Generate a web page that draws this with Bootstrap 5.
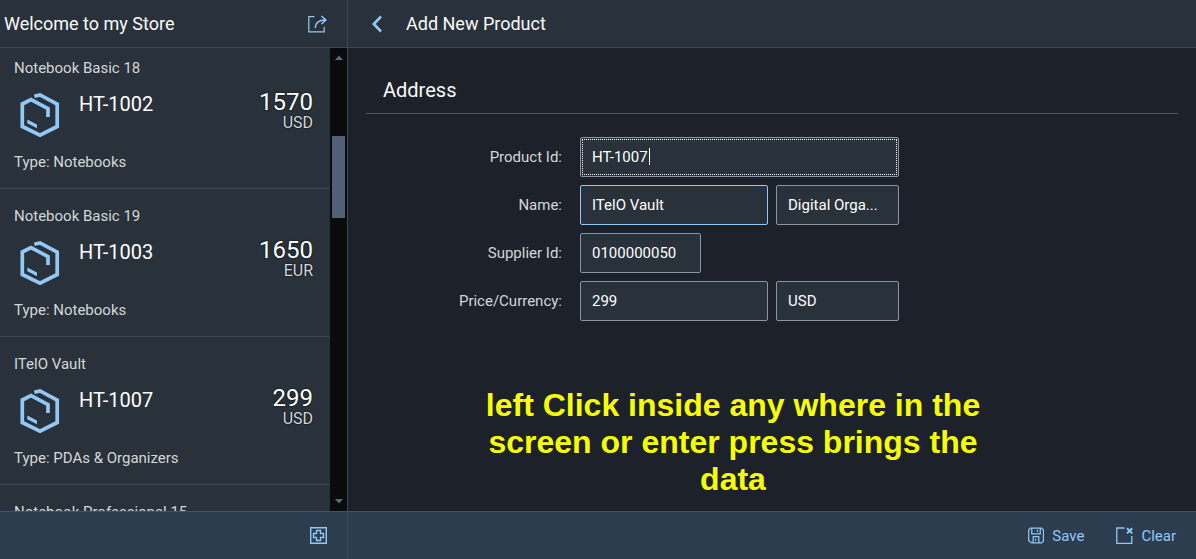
<!DOCTYPE html>
<html lang="en">
<head>
<meta charset="utf-8">
<meta name="viewport" content="width=device-width, initial-scale=1">
<title>My Store</title>
<link href="https://cdn.jsdelivr.net/npm/bootstrap@5.3.0/dist/css/bootstrap.min.css" rel="stylesheet">
<style>
  :root { --shell:#29313a; --page:#1d2129; --line:#3d4853; --accent:#91c8f6; --soft:#d3d7d9; --bar:#2c3d4f; }
  body { font-family:Roboto,"Noto Sans",sans-serif; font-size:15px; line-height:20px; color:#fafafa; background:var(--page); }
  .master { width:348px; border-right:1px solid var(--line); }
  .top-bar { height:48px; background:var(--shell); border-bottom:1px solid var(--line); }
  .top-bar h1, .top-bar h2 { font-size:18px; line-height:24px; font-weight:400; margin:0; }
  .bottom-bar { height:48px; background:var(--bar); border-top:1px solid #3f5468; }
  .tool { background:none; border:0; padding:0; color:var(--accent); display:flex; align-items:center; font-size:15px; line-height:20px; }
  .tool svg, .prod-icon { fill:none; stroke:currentColor; }
  .products { background:var(--shell); }
  .product { padding:17px 17px 16px 14px; border-bottom:1px solid var(--line); color:var(--soft); }
  .product:first-child { padding-top:10px; }
  .product-main { margin:12px 0; min-height:50px; }
  .prod-icon { color:var(--accent); width:50px; height:50px; margin-right:15px; }
  .prod-id { color:#fff; font-size:20px; line-height:28px; }
  .price { color:#fff; font-size:24px; line-height:24px; text-shadow:0 0 2px #000; }
  .unit { font-size:16px; line-height:18px; text-shadow:0 0 2px #000; }
  .scroll-track { width:17px; background:#0a0b0d; color:#5a6b80; padding:6px 0; }
  .scroll-thumb { width:13px; height:82px; background:#525f75; margin-top:75px; }
  .detail-body { padding:30px 18px 0; }
  .section-title { font-size:20px; line-height:24px; font-weight:400; padding:0 17px 11px; border-bottom:1px solid #515861; margin-bottom:23px; }
  .form-line { display:grid; grid-template-columns:196fr 319fr 261fr; column-gap:18px; align-items:center; margin-bottom:8px; }
  .form-line label { text-align:right; color:var(--soft); }
  .pair { display:grid; grid-template-columns:188fr 123fr; gap:8px; }
  .field { width:100%; height:40px; padding:0 11px; color:#fff; background:var(--shell); border:1px solid #8696a9; border-radius:2px; }
  .field-hover { border-color:var(--accent); }
  .field-active { outline:1px dotted #fff; outline-offset:-3px; }
  .field-short { width:38%; }
  .caret { position:absolute; left:69px; top:11px; width:1px; height:17px; background:#fff; }
  .hint { font-family:"Liberation Sans",Arial,sans-serif; font-weight:700; font-size:32px; line-height:37px; color:#f8ff00; text-align:center; margin:66px 78px 0 0; }
</style>
</head>
<body>
<div class="d-flex vh-100 overflow-hidden">
  <aside class="master d-flex flex-column flex-shrink-0">
    <header class="top-bar d-flex align-items-center justify-content-between flex-shrink-0 ps-1">
      <h1>Welcome to my Store</h1>
      <button class="tool me-3 pe-1" type="button" aria-label="Share">
        <svg width="19" height="18" viewBox="0 0 19 18" stroke-width="1.2"><path d="M6.5 1.6H.8v15.2h15.4v-5"/><path stroke-width="1.6" d="M7.3 13C7.3 8.500 10.500 5 17.500 5M13.500 1l4.300 4-4.300 4"/></svg>
      </button>
    </header>
    <div class="d-flex flex-grow-1 overflow-hidden">
      <div class="products flex-grow-1" id="products"></div>
      <div class="scroll-track d-flex flex-column align-items-center flex-shrink-0" aria-hidden="true">
        <svg width="8" height="7"><path d="M0 6l4-4.500L8 6z" fill="currentColor"/></svg>
        <div class="scroll-thumb"></div>
        <svg class="mt-auto" width="8" height="7"><path d="M0 1l4 4.500L8 1z" fill="currentColor"/></svg>
      </div>
    </div>
    <footer class="bottom-bar d-flex align-items-center justify-content-end flex-shrink-0 pe-3">
      <button class="tool me-1" type="button" aria-label="Add product">
        <svg width="17" height="17" viewBox="0 0 17 17" stroke-width="1.400"><path d="M.7.7h15.600v15.600H.7zM6.500 3.500h4v3h3v4h-3v3h-4v-3h-3v-4h3z"/></svg>
      </button>
    </footer>
  </aside>

  <main class="d-flex flex-column flex-grow-1">
    <header class="top-bar d-flex align-items-center flex-shrink-0 ps-4">
      <button class="tool" type="button" aria-label="Back">
        <svg width="10" height="18" viewBox="0 0 10 18" stroke-width="2.600"><path d="M9 1.500L1.800 9 9 16.500"/></svg>
      </button>
      <h2 class="ms-4">Add New Product</h2>
    </header>
    <div class="detail-body flex-grow-1 overflow-hidden">
      <form id="product-form">
        <h3 class="section-title">Address</h3>
        <div class="form-line">
          <label for="pid">Product Id:</label>
          <div class="position-relative"><input class="field field-active d-block" id="pid" value="HT-1007"><span class="caret"></span></div>
        </div>
        <div class="form-line">
          <label for="pname">Name:</label>
          <div class="pair"><input class="field field-hover" id="pname" value="ITelO Vault"><input class="field" aria-label="Category" value="Digital Orga..."></div>
        </div>
        <div class="form-line">
          <label for="supplier">Supplier Id:</label>
          <div><input class="field field-short d-block" id="supplier" value="0100000050"></div>
        </div>
        <div class="form-line">
          <label for="price">Price/Currency:</label>
          <div class="pair"><input class="field" id="price" value="299"><input class="field" aria-label="Currency" value="USD"></div>
        </div>
      </form>
      <p class="hint">left Click inside any where in the<br>screen or enter press brings the<br>data</p>
    </div>
    <footer class="bottom-bar d-flex align-items-center justify-content-end flex-shrink-0 pe-3">
      <button class="tool me-4" type="submit" form="product-form">
        <svg class="me-2" width="16" height="17" viewBox="0 0 17 17" stroke-width="1.300"><path d="M2.600.7h11.800l2 2v11.700l-2 2H3.800L.7 13.800V2.600zM4 .7v6.100h9V.7M10 2.300v2.500M5.500 16.300V9.700h6v6.600M8 12v2"/></svg>Save
      </button>
      <button class="tool ms-2 me-1" type="reset" form="product-form">
        <svg class="me-2" width="17" height="17" viewBox="0 0 17 17" stroke-width="1.300"><path d="M8.500 1H.8v15.300h15V9"/><path stroke-width="2" d="M11 1.200l5.200 5.200M16.200 1.200L11 6.400"/></svg>Clear
      </button>
    </footer>
  </main>
</div>
<script src="https://cdn.jsdelivr.net/npm/bootstrap@5.3.0/dist/js/bootstrap.bundle.min.js"></script>
<script>
  const products = [
    { name: "Notebook Basic 18", id: "HT-1002", price: "1570", unit: "USD", type: "Notebooks" },
    { name: "Notebook Basic 19", id: "HT-1003", price: "1650", unit: "EUR", type: "Notebooks" },
    { name: "ITelO Vault", id: "HT-1007", price: "299", unit: "USD", type: "PDAs &amp; Organizers" },
    { name: "Notebook Professional 15" }
  ];
  const details = p => p.id ? `
      <div class="product-main d-flex">
        <svg class="prod-icon flex-shrink-0" viewBox="0 0 50 50" stroke-width="3.700"><path d="M20.300 6.200L26 4.900 43.200 14v22.500L26 45.200 8.300 36.500V14L17 9.500l17 9V27"/><path fill="currentColor" stroke="none" d="M13.300 29.500l9.700 5v3.800l-9.700-5z"/></svg>
        <div class="prod-id flex-grow-1">${p.id}</div>
        <div class="text-end"><div class="price">${p.price}</div><div class="unit">${p.unit}</div></div>
      </div>
      <div>Type: ${p.type}</div>` : "";
  document.getElementById("products").innerHTML = products.map(p =>
    `<article class="product"><div>${p.name}</div>${details(p)}</article>`).join("");
</script>
</body>
</html>
